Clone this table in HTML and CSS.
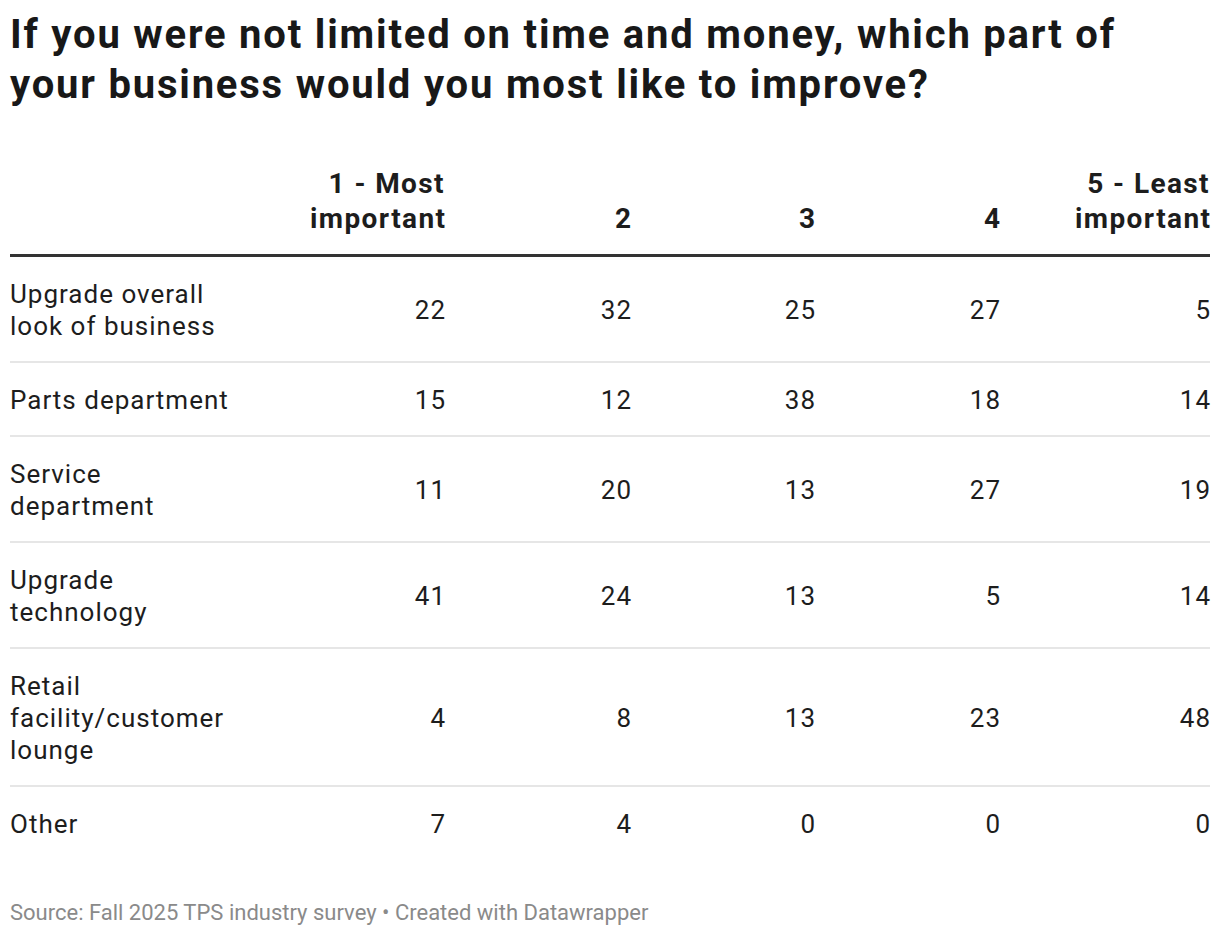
FILE: index.html
```html
<!DOCTYPE html>
<html lang="en">
<head>
<meta charset="utf-8">
<title>Survey table</title>
<link rel="stylesheet" href="styles.css">
</head>
<body>
<div class="chart">
  <h1 class="title">If you were not limited on time and money, which part of your business would you most like to improve?</h1>
  <table class="data">
    <colgroup>
      <col class="c-label">
      <col class="c1">
      <col class="c2">
      <col class="c3">
      <col class="c4">
      <col class="c5">
    </colgroup>
    <thead>
      <tr>
        <th class="lbl"></th>
        <th><span>1 - Most important</span></th>
        <th><span>2</span></th>
        <th><span>3</span></th>
        <th><span>4</span></th>
        <th><span>5 - Least important</span></th>
      </tr>
    </thead>
    <tbody>
      <tr><td class="lbl">Upgrade overall look of business</td><td><span>22</span></td><td><span>32</span></td><td><span>25</span></td><td><span>27</span></td><td><span>5</span></td></tr>
      <tr><td class="lbl">Parts department</td><td><span>15</span></td><td><span>12</span></td><td><span>38</span></td><td><span>18</span></td><td><span>14</span></td></tr>
      <tr><td class="lbl">Service department</td><td><span>11</span></td><td><span>20</span></td><td><span>13</span></td><td><span>27</span></td><td><span>19</span></td></tr>
      <tr><td class="lbl">Upgrade technology</td><td><span>41</span></td><td><span>24</span></td><td><span>13</span></td><td><span>5</span></td><td><span>14</span></td></tr>
      <tr><td class="lbl">Retail facility/customer lounge</td><td><span>4</span></td><td><span>8</span></td><td><span>13</span></td><td><span>23</span></td><td><span>48</span></td></tr>
      <tr><td class="lbl">Other</td><td><span>7</span></td><td><span>4</span></td><td><span>0</span></td><td><span>0</span></td><td><span>0</span></td></tr>
    </tbody>
  </table>
  <p class="footer">Source: Fall 2025 TPS industry survey • Created with Datawrapper</p>
</div>
</body>
</html>
```
FILE: styles.css
```css
html, body {
  margin: 0;
  padding: 0;
  background: #ffffff;
}
body {
  font-family: Roboto, "Liberation Sans", sans-serif;
  color: #1d1d1d;
}
.chart {
  padding: 10px;
  width: 1200px;
}
.title {
  margin: 0;
  max-width: 1200px;
  font-size: 40px;
  line-height: 50px;
  font-weight: 700;
  letter-spacing: 1.8px;
  color: #181818;
}
.data {
  margin-top: 56px;
  width: 1200px;
  border-collapse: collapse;
  table-layout: fixed;
}
.c-label { width: 250px; }
.c1 { width: 185px; }
.c2 { width: 186px; }
.c3 { width: 184px; }
.c4 { width: 185px; }
.c5 { width: 210px; }
.data th {
  font-size: 28px;
  line-height: 35px;
  font-weight: 700;
  letter-spacing: 1.4px;
  text-align: right;
  vertical-align: bottom;
  padding: 0 0 18px 0;
  border-bottom: 3px solid #333333;
  color: #1d1d1d;
}
.data th span {
  margin-right: -1.4px;
}
.data td {
  font-size: 26px;
  line-height: 32px;
  letter-spacing: 1px;
  text-align: right;
  vertical-align: middle;
  padding: 21px 0 19px 0;
  border-bottom: 2px solid #e6e6e6;
}
.data td span {
  margin-right: -1px;
}
.data td.lbl, .data th.lbl {
  text-align: left;
  padding-right: 15px;
}
.data tbody tr:last-child td {
  border-bottom: none;
}
.footer {
  margin: 40px 0 0 0;
  font-size: 22px;
  line-height: 28px;
  color: #8a8a8a;
}
```
